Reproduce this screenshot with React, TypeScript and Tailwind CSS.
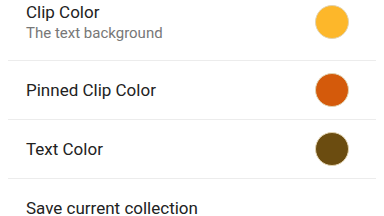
import React from 'react';

interface SettingRowProps {
  title: string;
  subtitle?: string;
  color?: string;
  className?: string;
  last?: boolean;
}

const SettingRow: React.FC<SettingRowProps> = ({ title, subtitle, color, className = '', last }) => {
  return (
    <div className={`mx-2 flex items-center justify-between pl-[18px] pr-[27px] ${last ? '' : 'border-b border-[#ececec]'} ${className}`}>
      <div className="flex flex-col">
        <span className="text-[17px] leading-[22px] text-[#222222]">{title}</span>
        {subtitle && <span className="text-[15px] leading-[20px] text-[#777777]">{subtitle}</span>}
      </div>
      {color && (
        <div className="h-[34px] w-[34px] rounded-full border border-[#e2d3b0]" style={{ backgroundColor: color }} />
      )}
    </div>
  );
};

export default function App() {
  return (
    <div className="h-[216px] w-[384px] overflow-hidden bg-white" style={{ fontFamily: 'Roboto, "Noto Sans", sans-serif' }}>
      <div className="-mt-[17px] flex flex-col">
        <SettingRow className="h-[78px]" title="Clip Color" subtitle="The text background" color="#FDB72A" />
        <SettingRow className="h-[59px]" title="Pinned Clip Color" color="#D45A0B" />
        <SettingRow className="h-[59px]" title="Text Color" color="#6B4C10" />
        <SettingRow className="h-[58px]" title="Save current collection" last />
      </div>
    </div>
  );
}
